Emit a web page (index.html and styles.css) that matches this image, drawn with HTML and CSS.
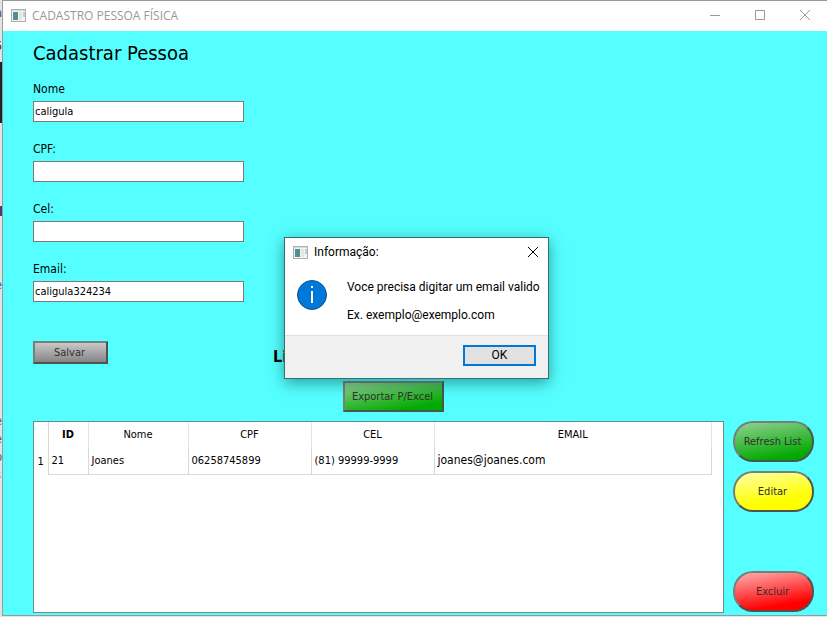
FILE: index.html
```html
<!DOCTYPE html>
<html lang="pt-BR">
<head>
<meta charset="utf-8">
<title>CADASTRO PESSOA FÍSICA</title>
<link rel="stylesheet" href="styles.css">
</head>
<body>
<div class="desktop">
  <div class="behind" aria-hidden="true">
    <span class="b-top">a</span>
    <span class="b-mark">5</span>
    <span class="b-dark"></span>
    <span class="b-pane tall"></span>
    <span class="b-purple"></span>
    <span class="b-pane"></span>
    <span class="b-link">e</span>
    <span class="b-code">e<br>e<br>p<br>s</span>
  </div>
  <div class="window">
    <header class="titlebar">
      <svg class="app-icon" viewBox="0 0 15 13" width="15" height="13"><rect x=".5" y=".5" width="14" height="12" fill="#f4f4f4" stroke="#a9b0b4"/><rect x="1" y="1" width="13" height="1" fill="#d5dade"/><rect x="2" y="3" width="5" height="8" fill="#4f9186"/><rect x="2" y="3" width="2" height="8" fill="#5d87a0"/><rect x="8" y="3" width="3" height="8" fill="#e2e5e7"/><rect x="12" y="3" width="2" height="5" fill="#c5cbd0"/></svg>
      <span class="title">CADASTRO PESSOA FÍSICA</span>
      <button class="win-btn" aria-label="Minimizar"><svg width="12" height="12" viewBox="0 0 12 12"><path d="M1 6.500h10" stroke="#999"/></svg></button>
      <button class="win-btn" aria-label="Maximizar"><svg width="12" height="12" viewBox="0 0 12 12"><path d="M1.500 1.500h9v9h-9z" fill="none" stroke="#999"/></svg></button>
      <button class="win-btn" aria-label="Fechar"><svg width="12" height="12" viewBox="0 0 12 12"><path d="M1 1l10 10M11 1L1 11" stroke="#999"/></svg></button>
    </header>
    <main class="client">
      <form class="form">
        <h1>Cadastrar Pessoa</h1>
        <label for="nome">Nome</label>
        <input id="nome" type="text" value="caligula">
        <label for="cpf">CPF:</label>
        <input id="cpf" type="text">
        <label for="cel">Cel:</label>
        <input id="cel" type="text">
        <label for="email">Email:</label>
        <input id="email" type="text" value="caligula324234">
        <div class="save-row">
          <button type="button" class="btn save">Salvar</button>
          <h2>Lista</h2>
        </div>
      </form>
      <div class="export-row"><button class="btn green export">Exportar P/Excel</button></div>
      <section class="list">
        <div class="table-box">
          <table>
            <colgroup><col class="c-row"><col class="c-id"><col class="c-nome"><col class="c-num"><col class="c-num"><col></colgroup>
            <thead>
              <tr><td></td><th class="current">ID</th><th>Nome</th><th>CPF</th><th>CEL</th><th>EMAIL</th></tr>
            </thead>
            <tbody>
              <tr><th>1</th><td>21</td><td>Joanes</td><td>06258745899</td><td>(81) 99999-9999</td><td class="mail">joanes@joanes.com</td></tr>
            </tbody>
          </table>
        </div>
        <div class="actions">
          <button class="btn pill green">Refresh List</button>
          <button class="btn pill yellow">Editar</button>
          <button class="btn pill red">Excluir</button>
        </div>
      </section>
    </main>
    <div class="overlay">
      <div class="dialog" role="dialog" aria-labelledby="dlg-title">
        <header class="dialog-title">
          <svg class="app-icon" viewBox="0 0 15 13" width="15" height="13"><rect x=".5" y=".5" width="14" height="12" fill="#f4f4f4" stroke="#a9b0b4"/><rect x="1" y="1" width="13" height="1" fill="#d5dade"/><rect x="2" y="3" width="5" height="8" fill="#4f9186"/><rect x="2" y="3" width="2" height="8" fill="#5d87a0"/><rect x="8" y="3" width="3" height="8" fill="#e2e5e7"/><rect x="12" y="3" width="2" height="5" fill="#c5cbd0"/></svg>
          <span id="dlg-title">Informação:</span>
          <button class="dialog-close" aria-label="Fechar"><svg width="12" height="12" viewBox="0 0 12 12"><path d="M1 1l10 10M11 1L1 11" stroke="#000"/></svg></button>
        </header>
        <div class="dialog-body">
          <svg width="32" height="32" viewBox="0 0 32 32"><circle cx="16" cy="16" r="14.500" fill="#0078d7" stroke="#0b5394"/><rect x="15" y="7" width="2" height="2" fill="#fff"/><rect x="15" y="12" width="2" height="12" fill="#fff"/></svg>
          <div class="message"><p>Voce precisa digitar um email valido</p><p>Ex. exemplo@exemplo.com</p></div>
        </div>
        <footer class="dialog-foot"><button class="ok">OK</button></footer>
      </div>
    </div>
  </div>
</div>
</body>
</html>
```

FILE: styles.css
```css
* { box-sizing: border-box; }

body {
  margin: 0;
  font-family: "DejaVu Sans Condensed", "Noto Sans", sans-serif;
  font-size: 12px;
  color: #000;
}

button, input { font: inherit; color: inherit; }
h1, h2, p { margin: 0; }

.desktop {
  display: flex;
  min-height: 100vh;
  background: #e4e4e4;
}

/* Sliver of the application behind the window */
.behind {
  flex: 0 0 2px;
  display: flex;
  flex-direction: column;
  align-items: flex-end;
  overflow: hidden;
  line-height: 18px;
  color: #555;
}
.b-top { height: 31px; padding-top: 4px; }
.b-mark { height: 31px; padding-top: 6px; color: #222; }
.b-dark { width: 2px; height: 61px; background: #20242c; }
.b-pane { width: 2px; height: 60px; }
.b-pane.tall { height: 83px; }
.b-purple { width: 2px; height: 10px; background: #503870; }
.b-link { height: 136px; color: #2a55a5; }

.window {
  position: relative;
  flex: 1;
  display: flex;
  flex-direction: column;
  min-width: 0;
  margin-bottom: 1px;
  border: solid #9a9a9a;
  border-width: 1px 0 1px 1px;
}

.titlebar {
  display: flex;
  align-items: center;
  height: 30px;
  padding: 0 0 2px 8px;
  background: #fff;
  color: #999;
}
.app-icon { flex: none; }
.title { flex: 1; padding-left: 6px; font-family: "Open Sans", sans-serif; }
.win-btn {
  display: grid;
  place-items: center;
  width: 45px;
  height: 28px;
  padding: 0;
  border: 0;
  background: none;
}

.client {
  flex: 1;
  display: flex;
  flex-direction: column;
  padding: 10px 13px 2px 30px;
  background: #55ffff;
}

.form { display: flex; flex-direction: column; align-items: flex-start; }
h1 { font-size: 20px; line-height: 24px; font-weight: 400; margin-bottom: 16px; }
.form label { line-height: 16px; margin-bottom: 4px; }
.form input {
  width: 211px;
  height: 21px;
  margin-bottom: 19px;
  padding: 0 1px;
  border: 1px solid #7a7a7a;
  border-radius: 0;
  background: #fff;
  font-size: 11px;
}
.save-row { display: flex; align-items: flex-start; margin-top: 20px; }
h2 { font-size: 16px; line-height: 20px; font-weight: 700; margin-left: 165px; padding-top: 6px; }

.btn {
  padding: 0 2px 0 0;
  border: 2px solid;
  border-color: #74807a #4c5450 #4c5450 #74807a;
  color: #303030;
  font-size: 11px;
}
.save { width: 75px; height: 23px; background: linear-gradient(#c8c8c8, #858585); }
.export-row { padding: 14px 0 9px 310px; }
.export { display: block; width: 101px; height: 31px; }
.green { background: linear-gradient(170deg, #92d092, #00aa00 85%); }
.yellow { background: linear-gradient(170deg, #ffffa8, #ffff00 70%); }
.red { background: linear-gradient(170deg, #ffb0b0, #ff0000 80%); }

.list { flex: 1; display: flex; gap: 9px; }
.table-box { flex: 1; border: 1px solid #6a8c8c; background: #fff; }
table {
  table-layout: fixed;
  width: calc(100% - 11px);
  border-collapse: collapse;
  font-size: 11px;
}
.c-row { width: 14px; }
.c-id { width: 40px; }
.c-nome { width: 100px; }
.c-num { width: 123px; }
th, td { padding: 0 3px; border-right: 1px solid #d8d8d8; font-weight: 400; text-align: left; }
thead tr { height: 25px; }
thead th { text-align: center; border-color: #e5e5e5; }
thead .current { font-weight: 700; }
tbody tr { height: 27px; }
tbody td { border-bottom: 1px solid #d8d8d8; }
tbody th { padding: 2px 0 0; text-align: center; }
.mail { font-size: 12px; }

.actions { width: 81px; display: flex; flex-direction: column; gap: 9px; padding-bottom: 1px; }
.pill { height: 41px; border-radius: 20px; }
.actions .red { margin-top: auto; }

.overlay {
  position: absolute;
  inset: 0;
  display: grid;
  place-items: center;
  padding: 0 0 1px 3px;
}
.dialog {
  width: 265px;
  border: 1px solid #2f7377;
  background: #fff;
  box-shadow: 0 4px 14px rgba(0, 60, 60, .5);
  font-family: Roboto, sans-serif;
}
.dialog-title {
  display: flex;
  align-items: center;
  height: 29px;
  padding: 0 9px 0 8px;
  gap: 6px;
}
.dialog-title span { flex: 1; }
.dialog-close { padding: 0; border: 0; background: none; line-height: 0; }
.dialog-body {
  display: flex;
  gap: 19px;
  padding: 12px 0 12px 11px;
}
.message { line-height: 16px; white-space: nowrap; }
.message p + p { margin-top: 12px; }
.dialog-foot {
  display: flex;
  justify-content: flex-end;
  padding: 9px 12px 12px;
  border-top: 1px solid #dfdfdf;
  background: #f0f0f0;
}
.ok {
  width: 73px;
  height: 21px;
  padding: 0;
  border: 2px solid #0078d7;
  background: #e1e1e1;
  line-height: 16px;
}
```
